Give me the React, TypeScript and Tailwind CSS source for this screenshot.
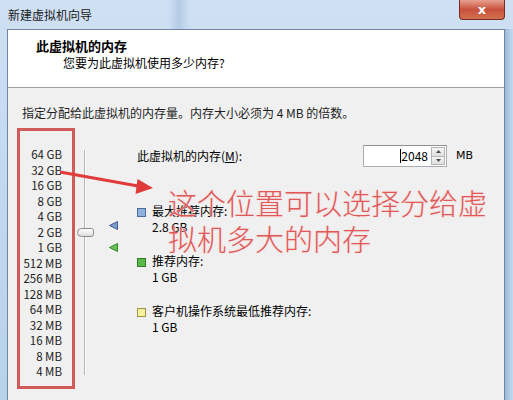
import React from "react";

const labels = [
  "64 GB", "32 GB", "16 GB", "8 GB", "4 GB", "2 GB", "1 GB",
  "512 MB", "256 MB", "128 MB", "64 MB", "32 MB", "16 MB", "8 MB", "4 MB",
];

function Legend({ color, border, title, value }: { color: string; border: string; title: string; value: string }) {
  return (
    <div className="flex h-[50px]">
      <div className="w-[15px] pt-[1px]">
        <div className={`w-[9px] h-[9px] border ${border} ${color}`} />
      </div>
      <div className="flex flex-col">
        <div className="leading-[16px] -mt-[4px]">{title}</div>
        <div className="leading-[16px]">{value}</div>
      </div>
    </div>
  );
}

export default function App() {
  return (
    <div
      className="w-[513px] h-[400px] relative overflow-hidden bg-gradient-to-b from-[#cfe0f3] via-[#c2d8ef] to-[#b9d1ea] text-[12px] text-black"
      style={{ fontFamily: '"Noto Sans CJK SC", "Liberation Sans", sans-serif' }}
    >
      {/* aero streak */}
      <div className="absolute left-[168px] top-0 w-[22px] h-[29px] bg-gradient-to-r from-transparent via-[#a9c3df] to-transparent opacity-70" />
      {/* title bar */}
      <div className="relative h-[29px] flex items-center pl-[8px] pt-[1px] leading-[16px] text-[#1a1a1a]">
        新建虚拟机向导
      </div>
      {/* close button */}
      <div className="absolute top-0 left-[459px] w-[46px] h-[20px] rounded-b-[4px] border border-t-0 border-[#7a2a22] bg-gradient-to-b from-[#e8a090] via-[#c8503c] to-[#d0704c] flex items-center justify-center">
        <span className="text-white font-bold text-[13px] leading-none" style={{ fontFamily: '"DejaVu Sans", sans-serif' }}>x</span>
      </div>
      {/* right frame shading */}
      <div className="absolute right-0 top-[29px] w-[8px] h-[371px] bg-gradient-to-r from-[#9cb8d8] to-[#c5daf0]" />
      {/* content */}
      <div className="ml-[7px] mr-[8px] h-[371px] border-l border-t border-r border-[#6f87a3] bg-[#f0f0f0] flex flex-col">
        <div className="h-[58px] bg-white border-b border-[#a0a0a0] pt-[7px] flex flex-col">
          <div className="pl-[28px] font-bold text-[13px] leading-[17px]">此虚拟机的内存</div>
          <div className="pl-[55px] leading-[17px]">您要为此虚拟机使用多少内存?</div>
        </div>
        <div className="pl-[14px] pt-[17px] flex flex-col">
          <div className="leading-[16px] text-[#1e1e1e]">指定分配给此虚拟机的内存量。内存大小必须为 4 MB 的倍数。</div>
          <div className="mt-[24px] flex">
            {/* labels */}
            <div className="w-[40px] pt-[2px] flex flex-col items-end text-[#222] text-[11.5px]">
              {labels.map((l) => (
                <div key={l} className="h-[15.5px] leading-[15.5px] whitespace-nowrap">{l}</div>
              ))}
            </div>
            {/* slider */}
            <div className="relative w-[75px] h-[232px]">
              <div className="absolute left-[22px] top-[5px] w-[1px] h-[225px] bg-[#b5b5b5]" />
              <div className="absolute left-[23px] top-[5px] w-[1px] h-[225px] bg-[#ffffff]" />
              <div className="absolute left-[15px] top-[83px] w-[17px] h-[9px] rounded-[3px] rounded-l-[5px] border border-[#8a8a8a] bg-gradient-to-b from-[#ffffff] to-[#dcdcdc]" />
              <svg className="absolute left-[47px] top-[76px]" width="9" height="9" viewBox="0 0 9 9">
                <polygon points="0.5,4.5 8.5,0.5 8.5,8.5" fill="#7d9ccc" stroke="#3e5f96" strokeWidth="1" />
              </svg>
              <svg className="absolute left-[47px] top-[98px]" width="9" height="9" viewBox="0 0 9 9">
                <polygon points="0.5,4.5 8.5,0.5 8.5,8.5" fill="#6cc05a" stroke="#2f8a24" strokeWidth="1" />
              </svg>
            </div>
            {/* right panel */}
            <div className="flex flex-col">
              <div className="flex items-center h-[22px]">
                <div className="w-[226px]">
                  此虚拟机的内存(<span className="underline">M</span>):
                </div>
                <div className="flex h-[22px] w-[84px] border border-[#abadb3] border-t-[#8e9298] bg-white">
                  <div className="flex-1 flex items-center justify-end pr-[3px]">
                    <span className="w-[1px] h-[14px] bg-black" />
                    <span className="leading-[14px]">2048</span>
                  </div>
                  <div className="w-[14px] flex flex-col my-[1px] mr-[1px]">
                    <div className="flex-1 border border-[#b6b6b6] bg-gradient-to-b from-[#f6f6f6] to-[#dedede] flex items-center justify-center">
                      <svg width="5" height="3" viewBox="0 0 5 3"><polygon points="0,3 2.5,0 5,3" fill="#4a4a4a" /></svg>
                    </div>
                    <div className="flex-1 border border-t-0 border-[#b6b6b6] bg-gradient-to-b from-[#f6f6f6] to-[#dedede] flex items-center justify-center">
                      <svg width="5" height="3" viewBox="0 0 5 3"><polygon points="0,0 2.5,3 5,0" fill="#4a4a4a" /></svg>
                    </div>
                  </div>
                </div>
                <div className="ml-[9px] text-[11px]" style={{ fontFamily: '"DejaVu Sans", sans-serif' }}>MB</div>
              </div>
              <div className="mt-[40px] flex flex-col">
                <Legend color="bg-[#8fb0da]" border="border-[#4a6d9e]" title="最大推荐内存:" value="2.8 GB" />
                <Legend color="bg-[#58b848]" border="border-[#2f7e26]" title="推荐内存:" value="1 GB" />
                <Legend color="bg-[#f6f19c]" border="border-[#9c9440]" title="客户机操作系统最低推荐内存:" value="1 GB" />
              </div>
            </div>
          </div>
        </div>
      </div>

      {/* annotation: red box */}
      <div className="absolute left-[17px] top-[128px] w-[58px] h-[261px] border-[3px] border-[#d05a5a] pointer-events-none" />
      {/* annotation: arrow */}
      <svg className="absolute left-0 top-0 pointer-events-none" width="513" height="400" viewBox="0 0 513 400">
        <line x1="60" y1="172" x2="138" y2="186" stroke="#e03a3a" strokeWidth="3" />
        <polygon points="153,188 135.5,194 137.5,179" fill="#e03a3a" />
      </svg>
      {/* annotation: text */}
      <div
        className="absolute left-[168px] top-[184px] text-[29px] leading-[36px] text-[#dc5a5a] font-light whitespace-nowrap pointer-events-none"
        style={{ textShadow: "0 0 2px #ffd0d0, 0 0 1px #ffe0e0" }}
      >
        <div>这个位置可以选择分给虚</div>
        <div>拟机多大的内存</div>
      </div>
    </div>
  );
}
